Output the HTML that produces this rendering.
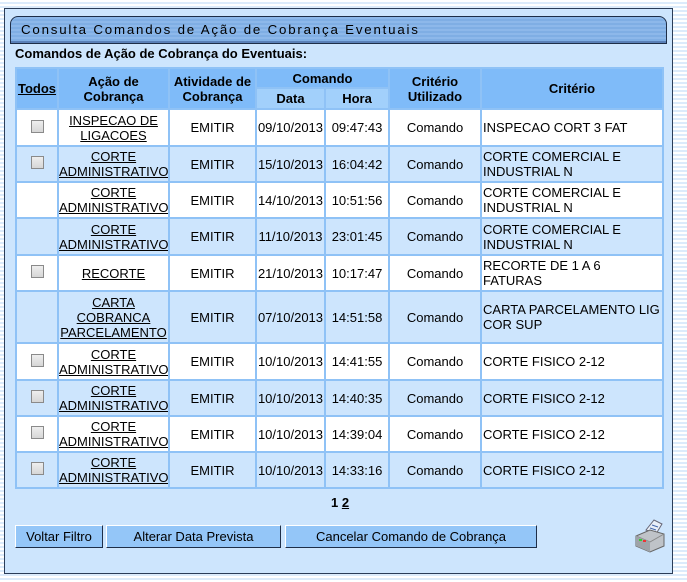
<!DOCTYPE html>
<html><head><meta charset="utf-8"><style>
body{margin:0;width:687px;height:582px;overflow:hidden;font-family:"Liberation Sans",Arial,sans-serif;font-size:13px;color:#000;
background:repeating-linear-gradient(#fff 0 2px,#dcebfb 2px 4px);}
.panel{position:absolute;left:4px;top:8px;width:667px;height:564px;background:#cde5fd;border:1px solid #2b3d58;}
.title{position:absolute;left:5px;top:7px;width:655px;height:26px;border:1px solid #1e2e48;border-radius:8px 8px 0 0;
background:repeating-linear-gradient(#8db8ea 0 2px,#7faee4 2px 4px);box-shadow:inset 0 -2px 0 #5a80b8;}
.title span{position:absolute;left:10px;top:5px;letter-spacing:1.8px;font-size:13.3px;}
.sub{position:absolute;left:10px;top:37px;font-weight:bold;}
table{position:absolute;left:10px;top:58px;width:649px;border-collapse:collapse;table-layout:fixed;}
td,th{border:2px solid #8fc2f6;text-align:center;padding:0;white-space:nowrap;overflow:hidden;}
th{background:#7fbbf9;font-weight:bold;}
th.s{background:#a2d0fb;}
tr.w td{background:#fff}
tr.b td{background:#cde5fd}
td.l{text-align:left;padding-left:1px}
a{color:#000;text-decoration:underline}
.cb{display:inline-block;width:11px;height:11px;border:1px solid #8a8a8a;background:linear-gradient(#eee,#d6d6d6);}
.pg{position:absolute;left:326px;top:486px;font-weight:bold}
.btn{position:absolute;top:516px;height:23px;background:#94c6f8;border:1px solid;border-color:#fff #1e2e48 #1e2e48 #fff;box-sizing:border-box;text-align:center;line-height:21px;}
</style></head><body>
<div class="panel">
<div class="title"><span>Consulta Comandos de Ação de Cobrança Eventuais</span></div>
<div class="sub">Comandos de Ação de Cobrança do Eventuais:</div>
<table>
<colgroup><col style="width:42px"><col style="width:111px"><col style="width:87px"><col style="width:69px"><col style="width:64px"><col style="width:92px"><col></colgroup>
<tr style="height:20px"><th rowspan="2"><a>Todos</a></th><th rowspan="2">Ação de<br>Cobrança</th><th rowspan="2">Atividade de<br>Cobrança</th><th colspan="2">Comando</th><th rowspan="2">Critério<br>Utilizado</th><th rowspan="2">Critério</th></tr>
<tr style="height:21px"><th class="s">Data</th><th class="s">Hora</th></tr>
<tr class="w" style="height:37px"><td><span class="cb"></span></td><td><a>INSPECAO DE<br>LIGACOES</a></td><td>EMITIR</td><td>09/10/2013</td><td>09:47:43</td><td>Comando</td><td class="l">INSPECAO CORT 3 FAT</td></tr>
<tr class="b" style="height:36px"><td><span class="cb"></span></td><td><a>CORTE<br>ADMINISTRATIVO</a></td><td>EMITIR</td><td>15/10/2013</td><td>16:04:42</td><td>Comando</td><td class="l">CORTE COMERCIAL E<br>INDUSTRIAL N</td></tr>
<tr class="w" style="height:36px"><td></td><td><a>CORTE<br>ADMINISTRATIVO</a></td><td>EMITIR</td><td>14/10/2013</td><td>10:51:56</td><td>Comando</td><td class="l">CORTE COMERCIAL E<br>INDUSTRIAL N</td></tr>
<tr class="b" style="height:37px"><td></td><td><a>CORTE<br>ADMINISTRATIVO</a></td><td>EMITIR</td><td>11/10/2013</td><td>23:01:45</td><td>Comando</td><td class="l">CORTE COMERCIAL E<br>INDUSTRIAL N</td></tr>
<tr class="w" style="height:36px"><td><span class="cb"></span></td><td><a>RECORTE</a></td><td>EMITIR</td><td>21/10/2013</td><td>10:17:47</td><td>Comando</td><td class="l">RECORTE DE 1 A 6<br>FATURAS</td></tr>
<tr class="b" style="height:52px"><td></td><td><a>CARTA<br>COBRANCA<br>PARCELAMENTO</a></td><td>EMITIR</td><td>07/10/2013</td><td>14:51:58</td><td>Comando</td><td class="l">CARTA PARCELAMENTO LIG<br>COR SUP</td></tr>
<tr class="w" style="height:37px"><td><span class="cb"></span></td><td><a>CORTE<br>ADMINISTRATIVO</a></td><td>EMITIR</td><td>10/10/2013</td><td>14:41:55</td><td>Comando</td><td class="l">CORTE FISICO 2-12</td></tr>
<tr class="b" style="height:36px"><td><span class="cb"></span></td><td><a>CORTE<br>ADMINISTRATIVO</a></td><td>EMITIR</td><td>10/10/2013</td><td>14:40:35</td><td>Comando</td><td class="l">CORTE FISICO 2-12</td></tr>
<tr class="w" style="height:36px"><td><span class="cb"></span></td><td><a>CORTE<br>ADMINISTRATIVO</a></td><td>EMITIR</td><td>10/10/2013</td><td>14:39:04</td><td>Comando</td><td class="l">CORTE FISICO 2-12</td></tr>
<tr class="b" style="height:36px"><td><span class="cb"></span></td><td><a>CORTE<br>ADMINISTRATIVO</a></td><td>EMITIR</td><td>10/10/2013</td><td>14:33:16</td><td>Comando</td><td class="l">CORTE FISICO 2-12</td></tr>
</table>
<div class="pg">1 <a>2</a></div>
<div class="btn" style="left:10px;width:88px">Voltar Filtro</div>
<div class="btn" style="left:101px;width:175px">Alterar Data Prevista</div>
<div class="btn" style="left:280px;width:252px">Cancelar Comando de Cobrança</div>
<svg style="position:absolute;left:627px;top:509px" width="36" height="36" viewBox="0 0 36 36">
<polygon points="14,12 22,2 30,6 24,16" fill="#e8eef8" stroke="#667" stroke-width="1"/>
<line x1="20" y1="7" x2="26" y2="9" stroke="#46a" /><line x1="18" y1="10" x2="24" y2="12" stroke="#46a"/>
<path d="M4 18 L18 12 L32 16 L32 28 L18 34 L4 28 Z" fill="#bfc3c8" stroke="#666"/>
<path d="M4 18 L18 24 L32 16" fill="none" stroke="#888"/>
<path d="M4 18 L18 24 L18 34 L4 28Z" fill="#9ea3a8"/>
<rect x="7" y="21" width="3" height="2" fill="#3c3"/><rect x="11" y="22" width="3" height="2" fill="#e33"/>
</svg>
</div>
</body></html>
